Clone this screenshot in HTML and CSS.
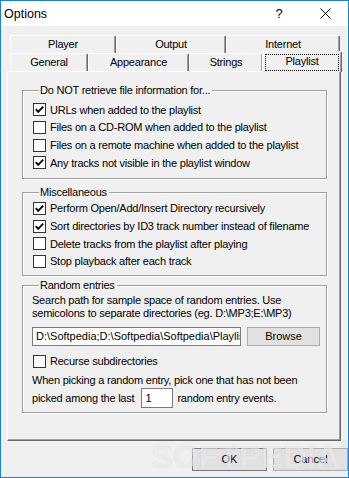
FILE: index.html
```html
<!DOCTYPE html>
<html>
<head>
<meta charset="utf-8">
<title>Options</title>
<link rel="stylesheet" href="styles.css">
</head>
<body>
<div class="window">
    <div class="titlebar">
        <span class="title">Options</span>
        <span class="tbtn help">?</span>
        <span class="tbtn close"><svg width="11" height="11" viewBox="0 0 11 11"><path d="M0.5 0.5 L10.5 10.5 M10.5 0.5 L0.5 10.5" stroke="#000" stroke-width="1" fill="none"/></svg></span>
    </div>
    <div class="client">
        <div class="tabs">
            <div class="tabrow">
                <div class="tab t-player">Player</div>
                <div class="tab t-output">Output</div>
                <div class="tab t-internet">Internet</div>
            </div>
            <div class="tabrow">
                <div class="tab t-general">General</div>
                <div class="tab t-appearance">Appearance</div>
                <div class="tab t-strings">Strings</div>
                <div class="tab t-playlist sel"><span class="focus">Playlist</span></div>
            </div>
        </div>
        <div class="panel">
            <fieldset class="group g1">
                <legend>Do NOT retrieve file information for...</legend>
                <label class="check"><span class="box on"><svg width="11" height="11" viewBox="0 0 11 11"><path d="M1.8 5.2 L4.2 7.8 L9.2 2.6" stroke="#000" stroke-width="1.9" fill="none"/></svg></span>URLs when added to the playlist</label>
                <label class="check"><span class="box"></span>Files on a CD-ROM when added to the playlist</label>
                <label class="check"><span class="box"></span>Files on a remote machine when added to the playlist</label>
                <label class="check"><span class="box on"><svg width="11" height="11" viewBox="0 0 11 11"><path d="M1.8 5.2 L4.2 7.8 L9.2 2.6" stroke="#000" stroke-width="1.9" fill="none"/></svg></span>Any tracks not visible in the playlist window</label>
            </fieldset>
            <fieldset class="group g2">
                <legend>Miscellaneous</legend>
                <label class="check"><span class="box on"><svg width="11" height="11" viewBox="0 0 11 11"><path d="M1.8 5.2 L4.2 7.8 L9.2 2.6" stroke="#000" stroke-width="1.9" fill="none"/></svg></span>Perform Open/Add/Insert Directory recursively</label>
                <label class="check"><span class="box on"><svg width="11" height="11" viewBox="0 0 11 11"><path d="M1.8 5.2 L4.2 7.8 L9.2 2.6" stroke="#000" stroke-width="1.9" fill="none"/></svg></span>Sort directories by ID3 track number instead of filename</label>
                <label class="check"><span class="box"></span>Delete tracks from the playlist after playing</label>
                <label class="check"><span class="box"></span>Stop playback after each track</label>
            </fieldset>
            <fieldset class="group g3">
                <legend>Random entries</legend>
                <p class="note">Search path for sample space of random entries. Use<br>semicolons to separate directories (eg. D:\MP3;E:\MP3)</p>
                <div class="pathrow">
                    <div class="edit path">D:\Softpedia;D:\Softpedia\Softpedia\Playlists</div>
                    <div class="btn browse">Browse</div>
                </div>
                <label class="check recurse"><span class="box"></span>Recurse subdirectories</label>
                <p class="line">When picking a random entry, pick one that has not been</p>
                <div class="lastrow">
                    <span>picked among the last</span>
                    <div class="edit count">1</div>
                    <span>random entry events.</span>
                </div>
            </fieldset>
        </div>
        <div class="buttons">
            <div class="btn ok">OK</div>
            <div class="btn cancel">Cancel</div>
        </div>
        <div class="watermark">SOFTPEDIA<sup>®</sup></div>
    </div>
</div>
</body>
</html>
```
FILE: styles.css
```css
* { margin: 0; padding: 0; box-sizing: border-box; }
body { width: 349px; height: 478px; background: #fff; color: #000; font: 11px "Liberation Sans", Arial, sans-serif; letter-spacing: -0.22px; }

.window { width: 349px; height: 478px; border: 1px solid #1c81d9; display: flex; flex-direction: column; overflow: hidden; }

.titlebar { height: 25px; background: #fff; display: flex; align-items: center; flex: none; letter-spacing: 0; }
.title { font-size: 12.5px; padding-left: 3px; flex: 1; }
.tbtn { width: 46px; height: 25px; display: flex; align-items: center; justify-content: center; }
.help { font-size: 13px; }
.close svg { display: block; }

.client { flex: 1; background: #f0f0f0; padding: 9px 0 0 6px; position: relative; }

.tabs { margin-left: 3px; width: 331px; }
.tabrow { display: flex; height: 18px; align-items: flex-start; }
.tab { height: 18px; line-height: 17px; text-align: center; background: #f0f0f0; border-top: 1px solid #fff; border-left: 1px solid #fff; border-right: 1px solid #696969; box-shadow: inset -1px 0 #a0a0a0; border-radius: 2px 2px 0 0; }
.t-player { width: 106px; }
.t-output { width: 110px; }
.t-internet { width: 114px; }
.t-general { width: 78px; }
.t-appearance { width: 101px; }
.t-strings { width: 74px; }
.t-playlist { width: 77px; }
.tab.sel { position: relative; z-index: 1; height: 21px; margin-top: -2px; margin-left: -1px; margin-right: -1px; width: 80px; padding: 2px 2px 0 2px; line-height: 13px; }
.focus { display: block; height: 17px; outline: 1px dotted #000; outline-offset: -1px; padding-top: 1px; }

.panel { width: 334px; height: 370px; border-top: 1px solid #fff; border-left: 1px solid #fff; border-right: 1px solid #696969; border-bottom: 1px solid #696969; box-shadow: inset -1px -1px #a0a0a0; padding: 12px 0 0 14px; }

.group { width: 305px; border: 1px solid #a0a0a0; box-shadow: 1px 1px #fff, inset 1px 1px #fff; padding: 4px 0 0 9px; min-width: 0; }
.group legend { margin-left: 7px; padding: 0 2px 0 1px; line-height: 13px; }
.g1 { padding-bottom: 6px; }
.g2 { margin-top: 7px; padding-top: 1px; padding-bottom: 5px; }
.g3 { margin-top: 3px; padding-top: 2px; padding-bottom: 4px; }

.check { display: flex; align-items: center; height: 17.67px; padding-left: 1px; }
.box { width: 13px; height: 13px; border: 1px solid #333; background: #fff; margin-right: 4px; flex: none; }
.box svg { display: block; }

.note { line-height: 13px; white-space: nowrap; }
.pathrow { display: flex; margin-top: 7px; height: 19px; }
.edit { background: #fff; border: 1px solid #7a7a7a; height: 19px; line-height: 17px; padding-left: 3px; white-space: nowrap; overflow: hidden; letter-spacing: 0; }
.path { width: 209px; }
.btn { background: #e1e1e1; border: 1px solid #adadad; text-align: center; letter-spacing: 0; }
.browse { width: 73px; margin-left: 6px; line-height: 17px; }
.recurse { margin-top: 6px; }
.line { line-height: 13px; margin-top: 4px; }
.lastrow { display: flex; align-items: center; height: 20px; margin-top: 1px; }
.count { width: 32px; height: 20px; line-height: 18px; margin: 0 4px 0 7px; }

.buttons { display: flex; justify-content: flex-end; gap: 6px; margin-top: 7px; width: 341px; }
.ok, .cancel { width: 75px; height: 23px; line-height: 21px; }
.ok { border-color: #7a7a7a; }

.watermark { position: absolute; left: 150px; top: 412px; font: bold 33px "Liberation Sans", Arial, sans-serif; color: rgba(255,255,255,0.6); text-shadow: 0 0 1px rgba(0,0,0,0.15); letter-spacing: 0; pointer-events: none; }
.watermark sup { font-size: 11px; vertical-align: top; }
```
